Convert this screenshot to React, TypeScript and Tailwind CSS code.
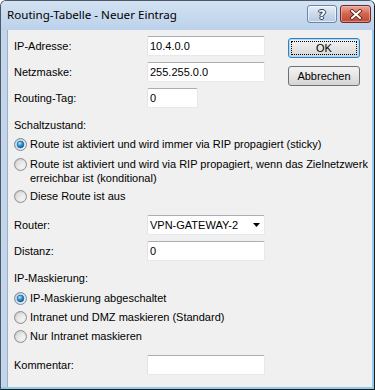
import React from 'react';

const ui = "font-['Liberation_Sans',Arial,sans-serif] text-[11px] leading-[14px] text-black";

function Radio({ checked }: { checked?: boolean }) {
  return (
    <svg width="13" height="13" viewBox="0 0 13 13" className="shrink-0">
      <defs>
        <linearGradient id="rbOuter" x1="0" y1="0" x2="1" y2="1">
          <stop offset="0" stopColor="#c4c4c4" />
          <stop offset="1" stopColor="#f4f4f4" />
        </linearGradient>
        <linearGradient id="rbInner" x1="0" y1="0" x2="1" y2="1">
          <stop offset="0" stopColor="#d9d9d9" />
          <stop offset="1" stopColor="#fbfbfb" />
        </linearGradient>
        <radialGradient id="rbDot" cx="0.38" cy="0.32" r="0.75">
          <stop offset="0" stopColor="#b8ecff" />
          <stop offset="0.45" stopColor="#2e9be0" />
          <stop offset="1" stopColor="#0d4c86" />
        </radialGradient>
      </defs>
      <circle cx="6.5" cy="6.5" r="6" fill="url(#rbOuter)" stroke={checked ? '#6c8fb0' : '#8f8f8f'} strokeWidth="1" />
      <circle cx="6.5" cy="6.5" r="4.3" fill="url(#rbInner)" />
      {checked && <circle cx="6.5" cy="6.5" r="3.4" fill="url(#rbDot)" stroke="#1b5b8f" strokeWidth="0.6" />}
    </svg>
  );
}

function TextBox({ value, w }: { value?: string; w: string }) {
  return (
    <div
      className={`${w} h-[20px] shrink-0 bg-white border border-[#e3e9ef] border-t-[#abadb3] border-l-[#e2e3ea] rounded-[2px] pl-[2px] flex items-center`}
    >
      <span className={ui}>{value}</span>
    </div>
  );
}

function Field({ label, children, className = '' }: { label: string; children: React.ReactNode; className?: string }) {
  return (
    <div className={`flex items-center h-[20px] ${className}`}>
      <span className={`${ui} w-[133px] shrink-0`}>{label}</span>
      {children}
    </div>
  );
}

function Option({ checked, lines, className = '' }: { checked?: boolean; lines: string[]; className?: string }) {
  return (
    <div className={`flex items-start ${className}`}>
      <div className="h-[14px] flex items-center">
        <Radio checked={checked} />
      </div>
      <div className={`${ui} ml-[3px]`}>
        {lines.map((l) => (
          <div key={l} className="whitespace-nowrap">{l}</div>
        ))}
      </div>
    </div>
  );
}

function Button({ label, focused, className = '' }: { label: string; focused?: boolean; className?: string }) {
  return (
    <div
      className={`relative w-[72px] h-[20px] rounded-[3px] border flex items-center justify-center bg-gradient-to-b from-[#f2f2f2] via-[#e6e6e6] to-[#d4d4d4] ${
        focused ? 'border-[#3c7fb1] shadow-[inset_0_0_0_1px_#9fdcff]' : 'border-[#707070]'
      } ${className}`}
    >
      {focused && <div className="absolute inset-[2px] border border-dotted border-black" />}
      <span className={ui}>{label}</span>
    </div>
  );
}

export default function App() {
  return (
    <div className="w-[375px] h-[390px] bg-white overflow-hidden">
      <div className="w-[375px] h-[390px] flex flex-col border border-[#4d5866] border-r-[#1c1c1c] border-b-[#1c1c1c] rounded-t-[6px] overflow-hidden bg-[#c2d5eb]">
        {/* title bar */}
        <div className="h-[29px] shrink-0 flex items-start bg-gradient-to-b from-[#d3e2f3] to-[#bcd1ea]">
          <div className="flex-1 pl-[6px] pt-[6px] font-['Noto_Sans',sans-serif] text-[11.6px] leading-[16px] text-black whitespace-nowrap">
            Routing-Tabelle - Neuer Eintrag
          </div>
          <div className="flex gap-[3px] pt-[4px] pr-[3px]">
            <div className="w-[30px] h-[18px] rounded-[3px] border border-[#6d84a3] bg-gradient-to-b from-[#e7eef8] via-[#cbd9ec] to-[#b6c9e2] flex items-center justify-center shadow-[inset_0_0_0_1px_rgba(255,255,255,0.6)]">
              <span className="font-['DejaVu_Sans',sans-serif] font-bold text-[13px] leading-[13px] text-white [text-shadow:0_0_1px_#283a52,1px_0_0_#283a52,-1px_0_0_#283a52,0_1px_0_#283a52,0_-1px_0_#283a52]">
                ?
              </span>
            </div>
            <div className="w-[31px] h-[18px] rounded-[3px] border border-[#6b2a22] bg-gradient-to-b from-[#e9a99a] via-[#d4634e] to-[#c04a36] flex items-center justify-center shadow-[inset_0_0_0_1px_rgba(255,200,190,0.5)]">
              <svg width="14" height="11" viewBox="0 0 14 11">
                <path d="M3 2 L11 9 M11 2 L3 9" stroke="#4b1a14" strokeWidth="3.6" strokeLinecap="square" />
                <path d="M3 2 L11 9 M11 2 L3 9" stroke="#ffffff" strokeWidth="2" strokeLinecap="square" />
              </svg>
            </div>
          </div>
        </div>

        {/* body */}
        <div className="flex h-[357px] shrink-0">
          <div className="w-[6px] shrink-0" />
          <div className="w-[365px] shrink-0 bg-[#f0f0f0] border-l border-[#9fb1c6] pl-[6px] flex flex-col">
            <div className="flex mt-[6px]">
              <div className="flex flex-col gap-[6px]">
                <Field label="IP-Adresse:">
                  <TextBox value="10.4.0.0" w="w-[118px]" />
                </Field>
                <Field label="Netzmaske:">
                  <TextBox value="255.255.0.0" w="w-[118px]" />
                </Field>
                <Field label="Routing-Tag:">
                  <TextBox value="0" w="w-[51px]" />
                </Field>
              </div>
              <div className="flex flex-col ml-[23px] mt-[2px] gap-[8px]">
                <Button label="OK" focused />
                <Button label="Abbrechen" />
              </div>
            </div>

            <div className={`${ui} mt-[10px]`}>Schaltzustand:</div>
            <Option checked className="mt-[5px]" lines={['Route ist aktiviert und wird immer via RIP propagiert (sticky)']} />
            <Option
              className="mt-[6px]"
              lines={['Route ist aktiviert und wird via RIP propagiert, wenn das Zielnetzwerk', 'erreichbar ist (konditional)']}
            />
            <Option className="mt-[4px]" lines={['Diese Route ist aus']} />

            <Field label="Router:" className="mt-[12px]">
              <div className="w-[118px] h-[20px] bg-white border border-[#e3e9ef] border-t-[#abadb3] border-l-[#e2e3ea] rounded-[2px] pl-[2px] pr-[4px] flex items-center justify-between">
                <span className={ui}>VPN-GATEWAY-2</span>
                <svg width="7" height="4" viewBox="0 0 7 4">
                  <path d="M0 0 H7 L3.5 4 Z" fill="#000" />
                </svg>
              </div>
            </Field>
            <Field label="Distanz:" className="mt-[6px]">
              <TextBox value="0" w="w-[118px]" />
            </Field>

            <div className={`${ui} mt-[10px]`}>IP-Maskierung:</div>
            <Option checked className="mt-[6px]" lines={['IP-Maskierung abgeschaltet']} />
            <Option className="mt-[5px]" lines={['Intranet und DMZ maskieren (Standard)']} />
            <Option className="mt-[5px]" lines={['Nur Intranet maskieren']} />

            <Field label="Kommentar:" className="mt-[12px]">
              <TextBox w="w-[118px]" />
            </Field>
          </div>
          <div className="w-[2px] shrink-0 bg-[#8fcbec]" />
        </div>
        <div className="h-[2px] shrink-0 bg-[#8fcbec]" />
      </div>
    </div>
  );
}
